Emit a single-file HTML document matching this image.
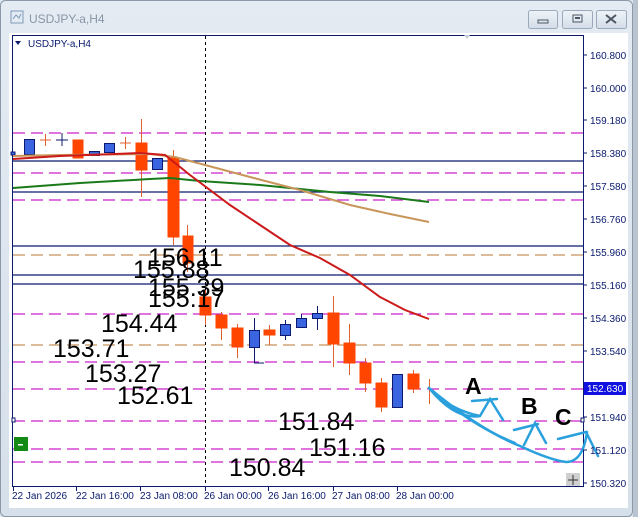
<!DOCTYPE html>
<html><head><meta charset="utf-8"><style>
html,body{margin:0;padding:0;width:638px;height:517px;overflow:hidden;background:#dfe7ef;}
svg{display:block;font-family:"Liberation Sans",sans-serif;}
</style></head><body>
<svg width="638" height="517" viewBox="0 0 638 517" xmlns="http://www.w3.org/2000/svg">
<defs><linearGradient id="tb" x1="0" y1="0" x2="0" y2="1"><stop offset="0" stop-color="#e4ebf3"/><stop offset="1" stop-color="#d6e0ea"/></linearGradient>
<linearGradient id="bt" x1="0" y1="0" x2="0" y2="1"><stop offset="0" stop-color="#eef3f8"/><stop offset="1" stop-color="#d3dde8"/></linearGradient></defs>
<rect x="0.5" y="0.5" width="632" height="516" rx="5" fill="url(#tb)" stroke="#8a98a8"/>
<rect x="633" y="0" width="5" height="517" fill="#b8c4d0"/>
<!-- title -->
<rect x="11" y="11" width="12" height="12" fill="none" stroke="#7f9bb8"/>
<path d="M13 19 L16 15 L19 18 L21 14" stroke="#7f9bb8" fill="none"/>
<text x="29" y="23" font-size="12" fill="#8896a6">USDJPY-a,H4</text>
<rect x="528.5" y="10.5" width="29" height="18" rx="2" fill="url(#bt)" stroke="#9aaabb"/>
<rect x="538" y="20" width="10" height="3" fill="none" stroke="#4b5563"/>
<rect x="562.5" y="10.5" width="30" height="18" rx="2" fill="url(#bt)" stroke="#9aaabb"/>
<rect x="573" y="15" width="9" height="7" fill="none" stroke="#4b5563"/><rect x="575" y="17" width="5" height="2" fill="#4b5563"/>
<rect x="596.5" y="10.5" width="30" height="18" rx="2" fill="url(#bt)" stroke="#9aaabb"/>
<path d="M606 15 L616 23 M616 15 L606 23" stroke="#4b5563" stroke-width="2"/>
<!-- client -->
<rect x="9" y="33" width="619" height="475" fill="#fff"/>
<rect x="12.5" y="35.5" width="571" height="451" fill="none" stroke="#0b1a6e"/>
<!-- horizontal lines -->
<g stroke-width="1.2">
<g stroke="#cc22cc" stroke-dasharray="12,6">
<line x1="13" x2="583" y1="133" y2="133"/><line x1="13" x2="583" y1="173" y2="173"/><line x1="13" x2="583" y1="200" y2="200"/>
<line x1="13" x2="583" y1="314" y2="314"/><line x1="13" x2="583" y1="362" y2="362"/><line x1="13" x2="583" y1="389" y2="389"/>
<line x1="13" x2="583" y1="421" y2="421"/><line x1="13" x2="583" y1="449" y2="449"/><line x1="13" x2="583" y1="462" y2="462"/></g>
<g stroke="#c8955a" stroke-dasharray="12,6"><line x1="13" x2="583" y1="255" y2="255"/><line x1="13" x2="583" y1="345" y2="345"/></g>
<g stroke="#0b1a6e"><line x1="13" x2="583" y1="161" y2="161"/><line x1="13" x2="583" y1="192" y2="192"/><line x1="13" x2="583" y1="246" y2="246"/><line x1="13" x2="583" y1="275" y2="275"/><line x1="13" x2="583" y1="284" y2="284"/></g>
</g>
<line x1="205.5" y1="36" x2="205.5" y2="486" stroke="#000" stroke-dasharray="3,3"/>
<!-- candles -->
<g stroke-width="1">
<g stroke="#0b1a6e" fill="#3a64e0">
<rect x="11" y="152" width="4" height="3"/><rect x="24.5" y="139.5" width="10" height="15"/><rect x="89.5" y="151.5" width="10" height="4"/><rect x="104.5" y="143.5" width="10" height="9"/>
<rect x="152.5" y="158.5" width="10" height="11"/><rect x="249.5" y="330.5" width="10" height="17"/><rect x="280.5" y="324.5" width="10" height="11"/><rect x="296.5" y="318.5" width="10" height="9"/><rect x="312.5" y="313.5" width="10" height="5"/><rect x="392.5" y="374.5" width="10" height="33"/>
<path d="M254.5 318V330M254.5 348V363H264M285.5 320V324M285.5 336V340M301.5 314V318M317.5 306V313M317.5 319V330M62 133V146M56 140H68" fill="none"/>
</g>
<g stroke="#ff4500" fill="#ff4500">
<path d="M45.5 134V146M40 140H51M125.5 137V149M120 143H131M141.5 119V197M173.5 150V245M187.5 225V272M205.5 290V325M221.5 312V340M237.5 324V358M269.5 325V345M333.5 296V367M349.5 324V375M365.5 358V392M381.5 378V412M413.5 370V393M429.5 379V404" fill="none" stroke="#e06030"/>
<rect x="73" y="140" width="10" height="18"/><rect x="136" y="143" width="11" height="27"/><rect x="168" y="158" width="11" height="79"/><rect x="183" y="236" width="10" height="27"/>
<rect x="200" y="297" width="11" height="18"/><rect x="216" y="315" width="11" height="13"/><rect x="232" y="328" width="11" height="19"/><rect x="264" y="330" width="11" height="5"/><rect x="328" y="313" width="11" height="31"/><rect x="344" y="343" width="11" height="20"/><rect x="360" y="363" width="11" height="20"/><rect x="376" y="383" width="11" height="24"/><rect x="408" y="374" width="11" height="15"/>
</g></g>
<!-- MAs -->
<polyline fill="none" stroke="#1a7a1a" stroke-width="2" points="13,188 80,183 150,179 170,178 200,181 260,185 330,192 380,196 429,202"/>
<polyline fill="none" stroke="#c8955a" stroke-width="2" points="13,156 60,155 150,154 175,157 205,165 250,177 300,190 350,205 390,214 429,222"/>
<polyline fill="none" stroke="#cc1a1a" stroke-width="2" points="13,159 60,156 140,153 165,155 190,175 230,205 260,225 290,245 320,258 350,275 380,297 405,310 429,319"/>
<!-- big labels -->
<g font-size="25" fill="#000">
<text x="148" y="266">156.11</text><text x="133" y="278">155.88</text><text x="148" y="296">155.39</text><text x="148" y="307">155.17</text>
<text x="101" y="332">154.44</text><text x="53" y="357">153.71</text><text x="85" y="382">153.27</text><text x="117" y="404">152.61</text>
<text x="278" y="430">151.84</text><text x="309" y="456">151.16</text><text x="229" y="476">150.84</text>
</g>
<!-- blue drawings -->
<g fill="none" stroke="#2aa0dc" stroke-width="2.5" stroke-linecap="round">
<path d="M429 388 Q455 420 480 416 Q450 410 429 388"/>
<path d="M429 388 Q480 430 520 446 Q550 460 566 462 Q583 462 587 432"/>
<path d="M429 388 Q470 425 515 443"/>
<path d="M472 401 L497 399 M480 416 L490 399 L503 420"/>
<path d="M514 430 L538 424 M524 445 L535 423 L546 443"/>
<path d="M558 439 L586 432 L598 456"/>
</g>
<g font-size="23" font-weight="bold" fill="#000"><text x="465" y="394">A</text><text x="521" y="414">B</text><text x="555" y="425">C</text></g>
<!-- price axis -->
<g stroke="#0b1a6e"><path d="M583 55H587M583 88H587M583 120H587M583 153H587M583 186H587M583 219H587M583 252H587M583 285H587M583 318H587M583 351H587M583 417H587M583 450H587M583 483H587"/></g>
<g font-size="10" fill="#0b1a6e">
<text x="590" y="59">160.800</text><text x="590" y="92">160.000</text><text x="590" y="124">159.180</text><text x="590" y="157">158.380</text><text x="590" y="190">157.580</text><text x="590" y="223">156.760</text><text x="590" y="256">155.960</text><text x="590" y="289">155.160</text><text x="590" y="322">154.360</text><text x="590" y="355">153.540</text><text x="590" y="421">151.940</text><text x="590" y="454">151.120</text><text x="590" y="487">150.320</text>
</g>
<rect x="584" y="382" width="42" height="13" fill="#1010e0"/><text x="587" y="392" font-size="10" fill="#fff">152.630</text>
<rect x="581" y="418" width="3" height="4" fill="#fff" stroke="#0b1a6e"/><rect x="12" y="418" width="3" height="4" fill="#fff" stroke="#0b1a6e"/>
<!-- time axis -->
<g stroke="#0b1a6e"><path d="M13.5 486V491M76.5 486V491M140.5 486V491M205.5 486V491M268.5 486V491M333.5 486V491M397.5 486V491"/></g>
<g font-size="10" fill="#0b1a6e"><text x="12" y="499">22 Jan 2026</text><text x="76" y="499">22 Jan 16:00</text><text x="140" y="499">23 Jan 08:00</text><text x="204" y="499">26 Jan 00:00</text><text x="268" y="499">26 Jan 16:00</text><text x="332" y="499">27 Jan 08:00</text><text x="396" y="499">28 Jan 00:00</text></g>
<!-- legend & misc -->
<path d="M15 41 L21 41 L18 45Z" fill="#0b1a6e"/><text x="28" y="47" font-size="10" fill="#0b1a6e">USDJPY-a,H4</text>
<path d="M464 35 L470 35 L467 39Z" fill="#c8ccd8"/>
<rect x="14" y="437" width="14" height="14" fill="#138a13"/><rect x="18" y="444" width="5" height="1.5" fill="#fff"/>
<rect x="566" y="473" width="14" height="13" fill="#d0d0d0"/><path d="M573 475V485M568 480H578" stroke="#333"/>
</svg>
</body></html>
